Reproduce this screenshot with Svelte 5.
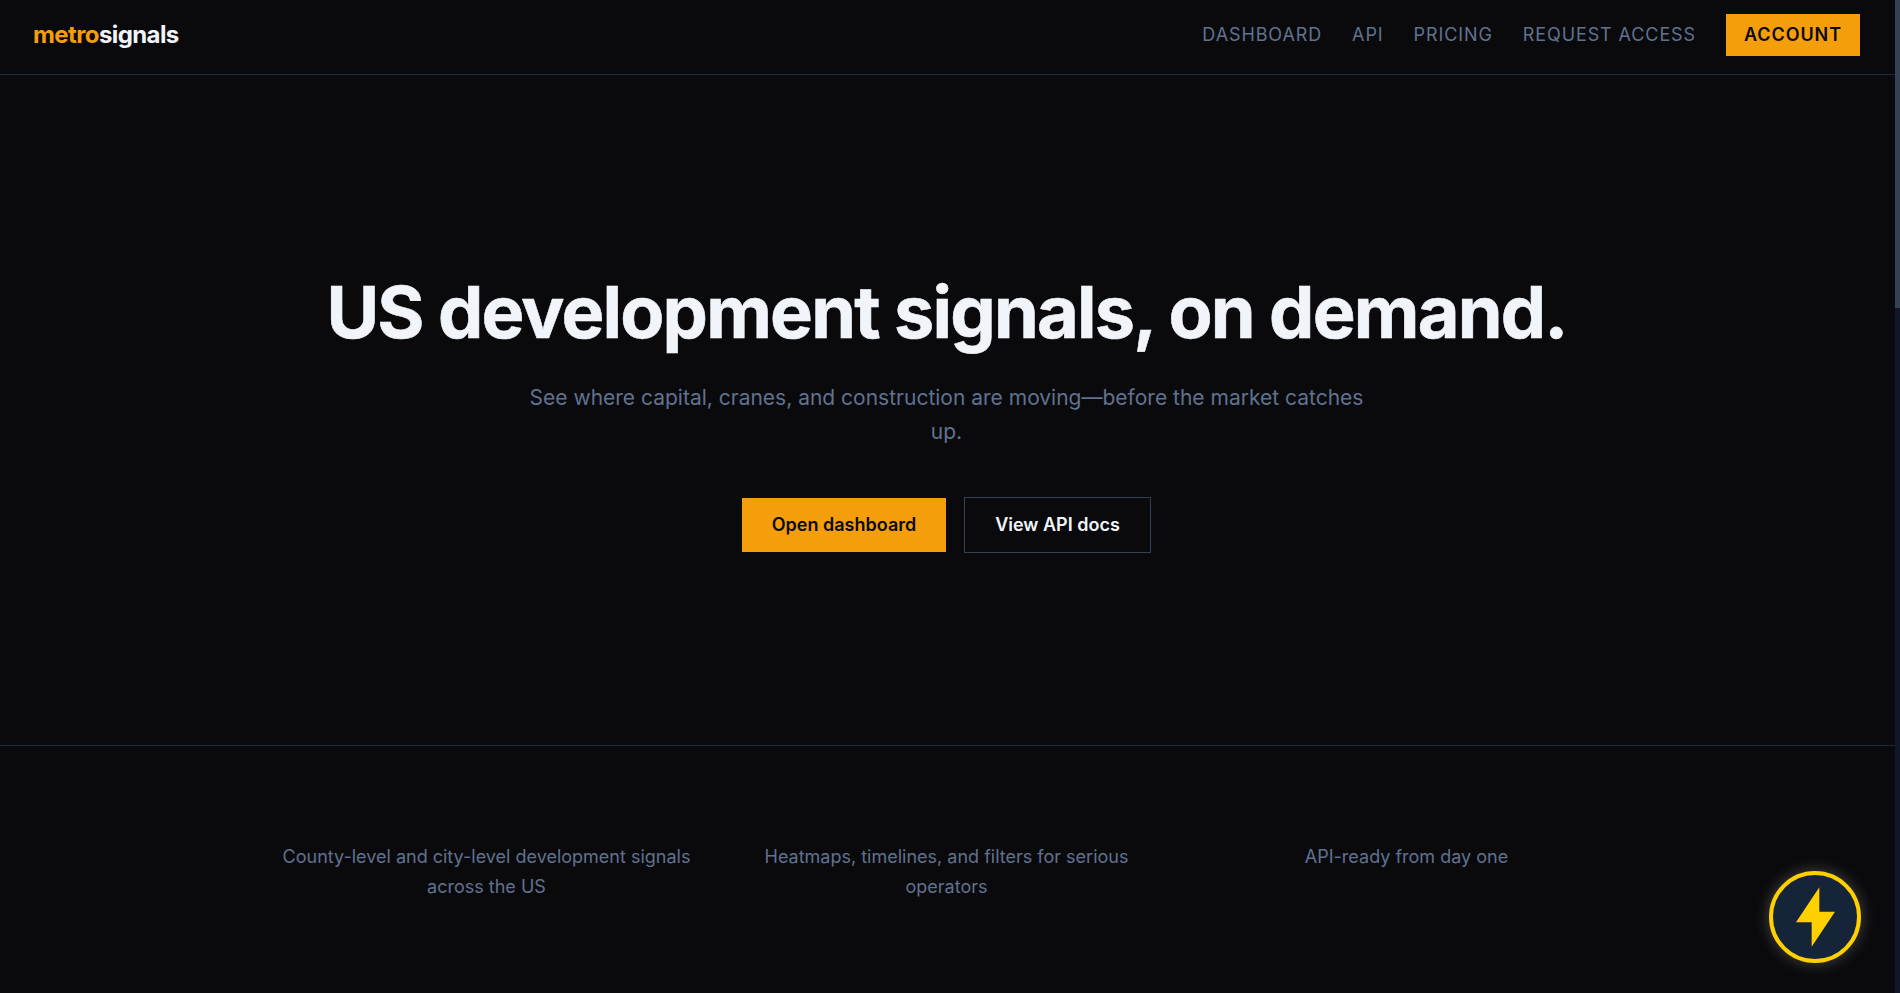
<script>
  const navLinks = ['DASHBOARD', 'API', 'PRICING', 'REQUEST ACCESS'];
  const features = [
    'County-level and city-level development signals across the US',
    'Heatmaps, timelines, and filters for serious operators',
    'API-ready from day one'
  ];
</script>

<div class="page">
  <header class="topbar">
    <a class="logo" href="#top"><span class="logo-accent">metro</span>signals</a>
    <nav class="nav">
      {#each navLinks as link}
        <a class="nav-link" href="#top">{link}</a>
      {/each}
      <a class="account" href="#top">ACCOUNT</a>
    </nav>
  </header>

  <section class="hero">
    <h1>US development signals, on demand.</h1>
    <p class="lead">See where capital, cranes, and construction are moving—before the market catches up.</p>
    <div class="actions">
      <a class="btn primary" href="#top">Open dashboard</a>
      <a class="btn secondary" href="#top">View API docs</a>
    </div>
  </section>

  <section class="features">
    <div class="feature-grid">
      {#each features as feature}
        <p>{feature}</p>
      {/each}
    </div>
  </section>
</div>

<div class="scrollbar" aria-hidden="true"><div class="thumb"></div></div>

<button class="fab" aria-label="Quick action">
  <svg viewBox="0 0 117 178" width="39" height="60" aria-hidden="true">
    <polygon points="70,0 70,73 117,73 47,178 47,105 0,105" fill="#ffd000" />
  </svg>
</button>

<style>
  :global(body) {
    margin: 0;
    background: #0a0a0d;
    font-family: Inter, "Noto Sans", sans-serif;
  }
  .page {
    box-sizing: border-box;
    min-height: 100vh;
    padding-right: 5px;
  }
  .scrollbar {
    position: fixed;
    top: 0;
    right: 0;
    bottom: 0;
    width: 5px;
    background: #0f172a;
  }
  .thumb {
    height: 308px;
    background: #334155;
  }
  .topbar {
    box-sizing: border-box;
    height: 75px;
    border-bottom: 1px solid #1e293b;
    display: flex;
    align-items: center;
    justify-content: space-between;
    padding: 0 35px 4px 33px;
  }
  .logo {
    padding-bottom: 2px;
    font-size: 24px;
    font-weight: 700;
    letter-spacing: -0.6px;
    color: #f1f5f9;
    text-decoration: none;
  }
  .logo-accent {
    color: #f59e0b;
  }
  .nav {
    display: flex;
    align-items: center;
    gap: 30px;
  }
  .nav-link {
    padding-bottom: 2px;
    font-size: 18px;
    letter-spacing: 0.9px;
    color: #607290;
    text-decoration: none;
  }
  .account {
    box-sizing: border-box;
    width: 134px;
    height: 42px;
    padding-bottom: 2px;
    display: flex;
    align-items: center;
    justify-content: center;
    background: #f59e0b;
    color: #0a0a0d;
    font-size: 18px;
    font-weight: 600;
    letter-spacing: 0.9px;
    text-decoration: none;
  }
  .hero {
    box-sizing: border-box;
    height: 670px;
    padding: 5px 2px 0 0;
    display: flex;
    flex-direction: column;
    align-items: center;
    justify-content: center;
    text-align: center;
  }
  h1 {
    margin: 0 0 30px;
    font-size: 72px;
    line-height: 1.1;
    font-weight: 700;
    letter-spacing: -1.8px;
    -webkit-text-stroke: 0.6px #f1f5f9;
    color: #f1f5f9;
  }
  .lead {
    margin: 0 0 48px;
    max-width: 840px;
    font-size: 21px;
    line-height: 34px;
    color: #607290;
  }
  .actions {
    display: flex;
    align-items: center;
    gap: 18px;
  }
  .btn {
    box-sizing: border-box;
    padding-bottom: 1px;
    display: flex;
    align-items: center;
    justify-content: center;
    font-size: 18px;
    font-weight: 600;
    text-decoration: none;
  }
  .primary {
    width: 204px;
    height: 54px;
    background: #f59e0b;
    color: #0a0a0d;
  }
  .secondary {
    width: 187px;
    height: 56px;
    border: 1px solid #334155;
    color: #f1f5f9;
  }
  .features {
    border-top: 1px solid #1e293b;
    padding: 96px 2px 0 0;
  }
  .feature-grid {
    width: 1332px;
    margin: 0 auto;
    display: grid;
    grid-template-columns: repeat(3, 1fr);
    gap: 48px;
  }
  .feature-grid p {
    margin: 0;
    font-size: 18px;
    line-height: 30px;
    text-align: center;
    color: #607290;
  }
  .fab {
    position: fixed;
    right: 39px;
    bottom: 30px;
    box-sizing: border-box;
    width: 92px;
    height: 92px;
    border: 4px solid #ffd000;
    border-radius: 50%;
    background: #16243a;
    box-shadow: 0 0 16px rgba(255, 255, 255, 0.25);
    display: flex;
    align-items: center;
    justify-content: center;
    padding: 0;
  }
</style>
